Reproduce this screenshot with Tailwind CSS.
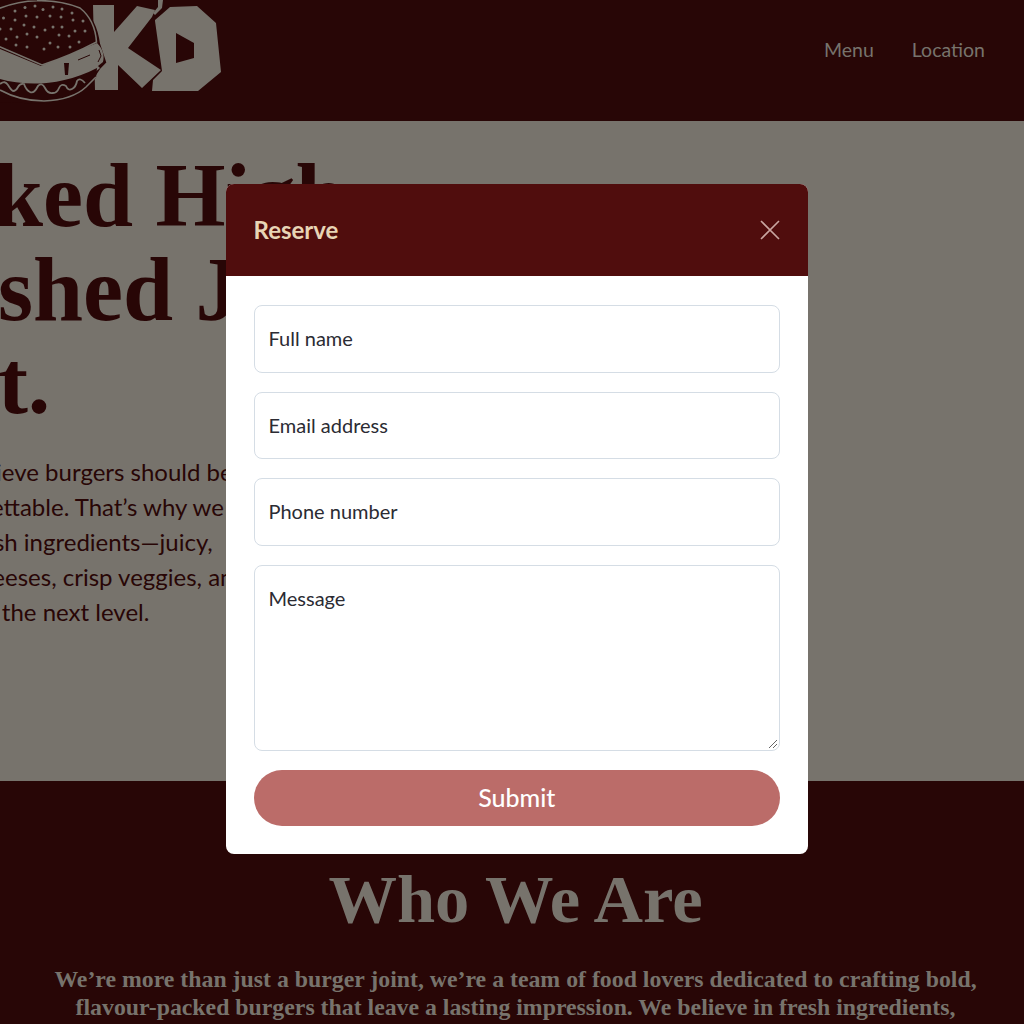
<!DOCTYPE html>
<html><head><meta charset="utf-8"><script src="https://cdn.jsdelivr.net/npm/@tailwindcss/browser@4"></script></head>
<body class="relative h-[1024px] w-[1024px] overflow-hidden bg-[#280606] font-['Lato','Noto_Sans',sans-serif]">
<header class="flex h-[121px] items-start justify-between bg-[#280606] pr-[39px]">
  <svg class="block h-[105px] w-[225px]" viewBox="0 0 225 105" fill="#77736c">
    <path d="M93 5h21v27l23-26 18 4-3 7-24 31 33 22-19 18-24-23v25H95z"/>
    <path d="M155 20l7-6 8-7 27-1 19 17 5 49-23 19h-46l1-11 9-9-7-50z"/>
    <path fill="#280606" d="M176 33l18 10v15l-18 5z"/>
    <path d="M158 0h5l-1 8-7 7-2-2 5-6z"/>
    <path fill="#280606" stroke="#280606" stroke-width="4" d="M0 0H37Q60 0 80 8 95 20 98 44l6 18-5 5-9 14-14 12-30 9-46-2z"/>
    <path d="M0 49l41 17 56-23c5 5 8 12 6 19l-5 4 2 2c-4 4-9 7-14 10-30 9-60 9-86 2z"/>
    <path fill="#280606" stroke="#77736c" stroke-width="1.600" d="M-2 46V9Q18 1 37 .8 60 0 80 8 95 20 96.500 42 70 56 42 65z"/>
    <path fill="#280606" d="M64 63h5l-1 12h-3z"/>
    <path fill="none" stroke="#280606" stroke-width="1" d="M78 60l12-5M99 50l2 6-3 6"/>
    <path fill="#280606" d="M0 79C25 86 60 87 97 68l-1 10-8 8c-10 8-25 13-42 15C28 102 12 98 0 91z"/>
    <path fill="none" stroke="#77736c" stroke-width="1.800" d="M0 84q5-4 8 1t5 6q3 0 5-4t6-3q2 6 6 8t8-6q4-4 7 2t8 5q4 0 6-5t7-2q2 5 6 3t5-8q3-4 8 2"/>
    <path fill="none" stroke="#77736c" stroke-width="1.600" d="M0 90q20 11 44 11 28-1 42-14 8-8 10-10"/>
    <g>
      <circle cx="15" cy="11" r="1.500"/><circle cx="25" cy="7.500" r="1.500"/><circle cx="35" cy="6" r="1.500"/><circle cx="43" cy="9.500" r="1.500"/><circle cx="53" cy="7" r="1.500"/><circle cx="62" cy="9" r="1.500"/><circle cx="72" cy="13" r="1.500"/>
      <circle cx="3.500" cy="18" r="1.500"/><circle cx="15" cy="20" r="1.500"/><circle cx="26" cy="16" r="1.500"/><circle cx="37" cy="17" r="1.500"/><circle cx="50" cy="16" r="1.500"/><circle cx="61" cy="17" r="1.500"/><circle cx="73" cy="20" r="1.500"/><circle cx="83" cy="21" r="1.500"/>
      <circle cx="0" cy="29" r="1.500"/><circle cx="11" cy="29" r="1.500"/><circle cx="24" cy="25" r="1.500"/><circle cx="34" cy="27" r="1.500"/><circle cx="45" cy="30" r="1.500"/><circle cx="53" cy="27" r="1.500"/><circle cx="62" cy="27" r="1.500"/><circle cx="75" cy="31" r="1.500"/><circle cx="85" cy="31" r="1.500"/>
      <circle cx="6" cy="39" r="1.500"/><circle cx="17" cy="37" r="1.500"/><circle cx="27" cy="34" r="1.500"/><circle cx="37" cy="37" r="1.500"/><circle cx="59" cy="35" r="1.500"/><circle cx="69" cy="36" r="1.500"/><circle cx="50" cy="43" r="1.500"/><circle cx="79" cy="42" r="1.500"/>
      <circle cx="16" cy="45" r="1.500"/><circle cx="27" cy="47" r="1.500"/><circle cx="44" cy="49" r="1.500"/><circle cx="58" cy="47" r="1.500"/><circle cx="70" cy="47" r="1.500"/>
    </g>
  </svg>
  <nav class="mt-[38px] flex gap-[38px] text-[19.500px] leading-[24px] text-[#77736c]"><span>Menu</span><span>Location</span></nav>
</header>
<main class="h-[660px] bg-[#77736c] pt-[28px] text-[#280606]">
  <h1 class="ml-[-172px] whitespace-nowrap font-['Liberation_Serif',serif] text-[90px] font-bold leading-[93.500px]">Stacked High<br>Smashed Juicy<br>Meat.</h1>
  <p class="ml-[-78px] mt-[24px] whitespace-pre text-[24px] leading-[35px]">We believe burgers should be
unforgettable. That’s why we
use fresh ingredients—juicy,
rich cheeses, crisp veggies, and
<span class="ml-[-9px]">them to the next level.</span></p>
</main>
<section class="pl-[7px] pt-[80px] text-center text-[#77736c]">
  <h2 class="font-['Liberation_Serif',serif] text-[68.500px] font-bold leading-[76px]">Who We Are</h2>
  <p class="mt-[28px] whitespace-pre font-['Liberation_Serif',serif] text-[23.800px] font-bold leading-[28px]">We’re more than just a burger joint, we’re a team of food lovers dedicated to crafting bold,
flavour-packed burgers that leave a lasting impression. We believe in fresh ingredients,</p>
</section>
<div class="absolute left-[225.500px] top-[184px] w-[582.500px] overflow-hidden rounded-[8px] bg-white">
  <div class="flex h-[92px] items-center justify-between bg-[#500d0d] px-[28px]">
    <span class="text-[24px] font-bold text-[#e8d5b5]">Reserve</span>
    <svg class="h-[20px] w-[20px]" viewBox="0 0 20 20" fill="none" stroke="#c9a5a0" stroke-width="1.600"><path d="M1 1l18 18M19 1L1 19"/></svg>
  </div>
  <form class="flex flex-col gap-[19px] px-[28px] pb-[28px] pt-[29px] text-[20px] text-[#2b2b33]">
    <div class="flex h-[67.500px] items-center rounded-[8px] border border-[#d5dde5] px-[14px] pb-[2px]">Full name</div>
    <div class="flex h-[67.500px] items-center rounded-[8px] border border-[#d5dde5] px-[14px] pb-[1px]">Email address</div>
    <div class="flex h-[67.500px] items-center rounded-[8px] border border-[#d5dde5] px-[14px] pb-[2px]">Phone number</div>
    <div class="relative h-[186.500px] rounded-[8px] border border-[#d5dde5] px-[14px] pt-[17px]">Message
      <svg class="absolute bottom-[1px] right-[1px] h-[10px] w-[10px]" viewBox="0 0 10 10" stroke="#666" fill="none"><path d="M1 9l8-8M5 9l4-4"/></svg>
    </div>
    <div class="flex h-[56px] items-center justify-center rounded-full bg-[#bb6c69] text-[25px] font-medium text-white">Submit</div>
  </form>
</div>
</body></html>
